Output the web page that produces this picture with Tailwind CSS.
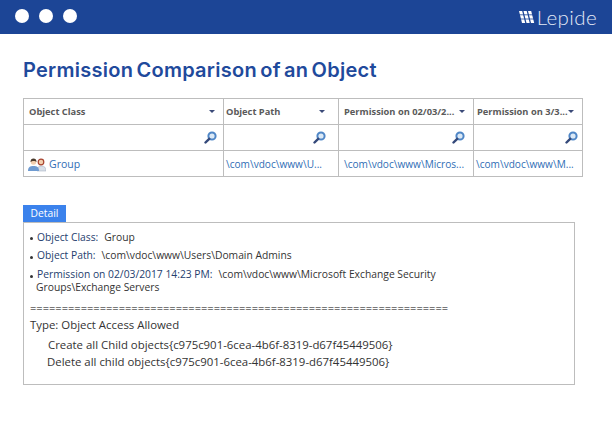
<!DOCTYPE html>
<html lang="en">
<head>
    <meta charset="UTF-8">
    <title>Permission Comparison of an Object</title>
    <script src="https://cdn.jsdelivr.net/npm/@tailwindcss/browser@4"></script>
</head>
<body class="bg-white w-[612px] h-[430px] overflow-hidden font-['Open_Sans',sans-serif]">
    <!-- window bar -->
    <header class="h-[34px] bg-[#1c4596] flex items-center justify-between pl-[15px] pr-[15px]">
        <div class="flex gap-[10px] pb-[2px]">
            <span class="w-[14px] h-[14px] rounded-full bg-white"></span>
            <span class="w-[14px] h-[14px] rounded-full bg-white"></span>
            <span class="w-[14px] h-[14px] rounded-full bg-white"></span>
        </div>
        <div class="flex items-center gap-[2px] text-white">
            <svg width="16" height="14" viewBox="0 0 16 14">
                <path d="M0 1h3.200l3 12H3zM4.500 1h3.200l3 12H7.500zM9 1h3.200l3 12H12z" fill="#fff"/>
                <path d="M0 4.800h16M0 9h16" stroke="#1c4596" stroke-width=".8"/>
            </svg>
            <span class="font-['Lato',sans-serif] font-light text-[20.500px] leading-none tracking-[0.4px] text-[#e4eaf6]">Lepide</span>
        </div>
    </header>

    <main class="pl-[23px] pt-[23px]">
        <h1 class="font-['Inter',sans-serif] font-semibold text-[20px] leading-[26px] tracking-[0.26px] [word-spacing:-2px] text-[#1f4a9c]">Permission Comparison of an Object</h1>

        <!-- comparison table -->
        <div class="mt-[15px] w-[560px] border border-[#bdbdbd] text-[10.100px]">
            <div class="grid grid-cols-[199px_115px_135px_1fr] h-[26px] border-b border-[#bdbdbd] font-bold text-[#5a5a5a] text-[9.300px]">
                <div class="flex items-center justify-between pl-[5px] pr-[8px]"><span>Object Class</span><span class="border-x-[3px] border-t-[3px] border-x-transparent border-t-[#3b4a78]"></span></div>
                <div class="flex items-center justify-between pl-[2px] pr-[13px] border-l border-[#bdbdbd]"><span>Object Path</span><span class="border-x-[3px] border-t-[3px] border-x-transparent border-t-[#3b4a78]"></span></div>
                <div class="flex items-center justify-between pl-[5px] pr-[8px] border-l border-[#bdbdbd]"><span>Permission on 02/03/2...</span><span class="border-x-[3px] border-t-[3px] border-x-transparent border-t-[#3b4a78]"></span></div>
                <div class="flex items-center justify-between pl-[3px] pr-[8px] border-l border-[#bdbdbd]"><span>Permission on 3/3...</span><span class="border-x-[3px] border-t-[3px] border-x-transparent border-t-[#3b4a78]"></span></div>
            </div>
            <div class="grid grid-cols-[199px_115px_135px_1fr] h-[26px] border-b border-[#bdbdbd]">
                <div class="flex items-center justify-end pr-[6px]">
                    <svg width="13" height="13" viewBox="0 0 13 13" fill="none"><circle cx="8" cy="5" r="3.600" stroke="#4f86c6" stroke-width="2" fill="#dbe9f6"/><path d="M5.200 7.800 1.500 11.500" stroke="#34497a" stroke-width="2.400" stroke-linecap="round"/></svg>
                </div>
                <div class="flex items-center justify-end pr-[12px] border-l border-[#bdbdbd]">
                    <svg width="13" height="13" viewBox="0 0 13 13" fill="none"><circle cx="8" cy="5" r="3.600" stroke="#4f86c6" stroke-width="2" fill="#dbe9f6"/><path d="M5.200 7.800 1.500 11.500" stroke="#34497a" stroke-width="2.400" stroke-linecap="round"/></svg>
                </div>
                <div class="flex items-center justify-end pr-[8px] border-l border-[#bdbdbd]">
                    <svg width="13" height="13" viewBox="0 0 13 13" fill="none"><circle cx="8" cy="5" r="3.600" stroke="#4f86c6" stroke-width="2" fill="#dbe9f6"/><path d="M5.200 7.800 1.500 11.500" stroke="#34497a" stroke-width="2.400" stroke-linecap="round"/></svg>
                </div>
                <div class="flex items-center justify-end pr-[4px] border-l border-[#bdbdbd]">
                    <svg width="13" height="13" viewBox="0 0 13 13" fill="none"><circle cx="8" cy="5" r="3.600" stroke="#4f86c6" stroke-width="2" fill="#dbe9f6"/><path d="M5.200 7.800 1.500 11.500" stroke="#34497a" stroke-width="2.400" stroke-linecap="round"/></svg>
                </div>
            </div>
            <div class="grid grid-cols-[199px_115px_135px_1fr] h-[25px] text-[#2f6db5]">
                <div class="flex items-center pl-[4px] gap-[3px] pt-[2px]">
                    <svg width="18" height="15" viewBox="0 0 18 15">
                        <path d="M9 14c0-3.500 1.500-5 4.500-5s4.500 1.500 4.500 5z" fill="#d9dfe8" stroke="#9aa6b8" stroke-width=".5"/>
                        <circle cx="13" cy="5" r="2.800" fill="#f3cfae" stroke="#a8432f" stroke-width="1.200"/>
                        <path d="M0 14c0-4 2-5 5.500-5s5.500 1 5.500 5z" fill="#6f9bd1"/>
                        <circle cx="5.500" cy="5" r="2.800" fill="#f3cfae"/>
                        <path d="M2.500 5c0-2.500 1.200-3.500 3-3.500s3 1 3 3.500c-1-1.500-4.500-1.500-6 0z" fill="#4a3a2c"/>
                    </svg>
                    <span class="text-[10.500px]">Group</span>
                </div>
                <div class="flex items-center pl-[2px] pt-[2px] border-l border-[#bdbdbd]">\com\vdoc\www\U...</div>
                <div class="flex items-center pl-[5px] pt-[2px] border-l border-[#bdbdbd]">\com\vdoc\www\Micros...</div>
                <div class="flex items-center pl-[2px] pt-[2px] border-l border-[#bdbdbd]">\com\vdoc\www\M...</div>
            </div>
        </div>

        <!-- detail panel -->
        <div class="mt-[28px] w-[43px] h-[17px] bg-[#3b82ec] text-white text-[10.300px] font-medium flex items-center justify-center">Detail</div>
        <div class="w-[552px] h-[163px] border border-[#bdbdbd] pl-[6px] pt-[5px] text-[10.300px] leading-[13px] text-[#333]">
            <div class="flex items-center h-[18px]"><span class="w-[3px] h-[3px] rounded-full bg-[#333] mr-[4px] mt-[3px]"></span><span class="text-[#25406e]">Object Class:</span><span class="ml-[6px]">Group</span></div>
            <div class="flex items-center h-[19px]"><span class="w-[3px] h-[3px] rounded-full bg-[#333] mr-[4px] mt-[3px]"></span><span class="text-[#25406e]">Object Path:</span><span class="ml-[6px]">\com\vdoc\www\Users\Domain Admins</span></div>
            <div class="flex items-center h-[19px]"><span class="w-[3px] h-[3px] rounded-full bg-[#333] mr-[4px] mt-[3px]"></span><span class="text-[#25406e]">Permission on 02/03/2017 14:23 PM:</span><span class="ml-[6px]">\com\vdoc\www\Microsoft Exchange Security</span></div>
            <div class="pl-[6px] -mt-[3px]">Groups\Exchange Servers</div>
            <div class="mt-[7px] text-black text-[11.080px]">==================================================================</div>
            <div class="mt-[4px] text-[11.400px]">Type: Object Access Allowed</div>
            <div class="mt-[7px] pl-[18px] text-[11.400px]">Create all Child objects{c975c901-6cea-4b6f-8319-d67f45449506}</div>
            <div class="mt-[4px] pl-[17px] text-[11.400px]">Delete all child objects{c975c901-6cea-4b6f-8319-d67f45449506}</div>
        </div>
    </main>
</body>
</html>
